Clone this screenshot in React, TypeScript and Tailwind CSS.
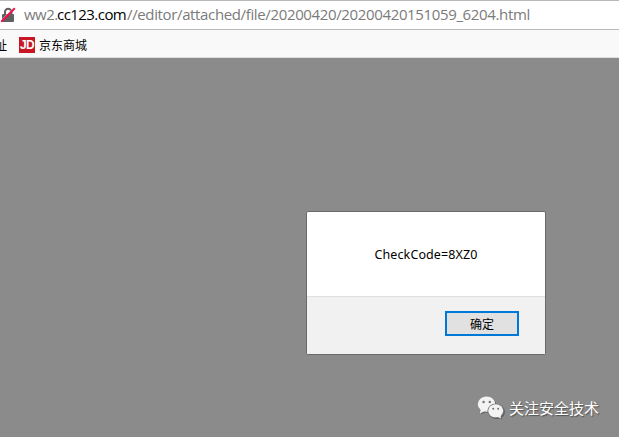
function BlockedLock() {
  return (
    <svg className="block h-[16px] w-[16px] shrink-0" viewBox="0 0 16 16">
      <path d="M5 7.5V5a3.2 3.2 0 0 1 6.4 0v2.5" fill="none" stroke="#606060" strokeWidth="2" />
      <rect x="2" y="7" width="12" height="8" rx="1" fill="#606060" />
      <path d="M1.2 13.2 13.4 1" stroke="#fff" strokeOpacity="0.6" strokeWidth="1" />
      <path d="M1.2 14.8 14.8 1.2" stroke="#f0104a" strokeWidth="2" />
    </svg>
  );
}

function AddressBar() {
  return (
    <div className="flex h-[30px] items-center border-y border-[#b9b9b9] bg-white font-['Open_Sans','Noto_Sans',sans-serif] text-[15px] leading-[28px] text-[#7b7b7b]">
      <BlockedLock />
      <div className="-mt-[2px] ml-[8px] flex whitespace-pre">
        <span className="w-[33px] tracking-[-0.5px]">ww2.</span>
        <span className="w-[70px] tracking-[-0.55px] text-black">cc123.com</span>
        <span className="tracking-[-0.36px]">//editor/attached/file/20200420/20200420151059_6204.html</span>
      </div>
    </div>
  );
}

function Bookmarks() {
  return (
    <div className="flex h-[28px] items-center overflow-hidden border-b border-[#dedede] bg-[#f9f9f9] pt-[3px] font-['Noto_Sans_CJK_SC',sans-serif] text-[12px] leading-[16px] text-black">
      <span className="-ml-[5px] w-[24px] shrink-0">址</span>
      <span className="flex h-[16px] w-[16px] items-center justify-center bg-[#c81623] font-['Liberation_Sans',sans-serif] text-[12px] leading-[16px] font-bold tracking-[-0.6px] text-white">
        JD
      </span>
      <span className="ml-[4px]">京东商城</span>
    </div>
  );
}

function AlertDialog() {
  return (
    <div className="flex h-[144px] w-[240px] flex-col overflow-hidden rounded-[2px] border border-[#696969] bg-white">
      <div className="flex h-[84px] items-center justify-center pt-[2px] font-['Noto_Sans','Open_Sans',sans-serif] text-[12.5px] text-black">
        <span className="tracking-[0.1px]">CheckCode=8XZ0</span>
      </div>
      <div className="flex flex-1 items-start justify-end border-t border-[#dfdfdf] bg-[#f1f1f1] pt-[14px] pr-[26px]">
        <button className="flex h-[25px] w-[74px] items-center justify-center border-2 border-[#0078d7] bg-[#e1e1e1] font-['Noto_Sans_CJK_SC',sans-serif] text-[12px] leading-[16px] text-black">
          确定
        </button>
      </div>
    </div>
  );
}

function ChatLogo() {
  return (
    <svg className="h-[24px] w-[28px] drop-shadow-[1px_1px_0px_#606060]" viewBox="0 0 28 24">
      <ellipse cx="9.6" cy="8.2" rx="8.8" ry="7.6" fill="#f3f3f3" />
      <path d="M3.8 13 3 17.4l4.4-2.2Z" fill="#f3f3f3" />
      <ellipse cx="18.7" cy="14.8" rx="8.3" ry="7.3" fill="#777777" />
      <ellipse cx="18.7" cy="14.8" rx="7.5" ry="6.5" fill="#f3f3f3" />
      <path d="m20.5 20.8 3.6 1.8-.6-3.6Z" fill="#f3f3f3" />
      <g fill="#737373">
        <circle cx="6.6" cy="6" r="1.2" />
        <circle cx="12.8" cy="6" r="1.2" />
        <circle cx="16.2" cy="12.8" r="1" />
        <circle cx="21.2" cy="12.8" r="1" />
      </g>
    </svg>
  );
}

export default function App() {
  return (
    <div className="flex h-[437px] w-[619px] flex-col overflow-hidden">
      <AddressBar />
      <Bookmarks />
      <main className="flex flex-1 flex-col bg-[#8b8b8b] pt-[153px] pl-[306px]">
        <AlertDialog />
        <div className="mt-[41px] ml-[171px] flex items-center font-['Noto_Sans_CJK_SC',sans-serif] text-[15px] leading-[24px] text-white">
          <ChatLogo />
          <span className="ml-[4px] [text-shadow:1px_1px_1px_#505050]">关注安全技术</span>
        </div>
      </main>
    </div>
  );
}
